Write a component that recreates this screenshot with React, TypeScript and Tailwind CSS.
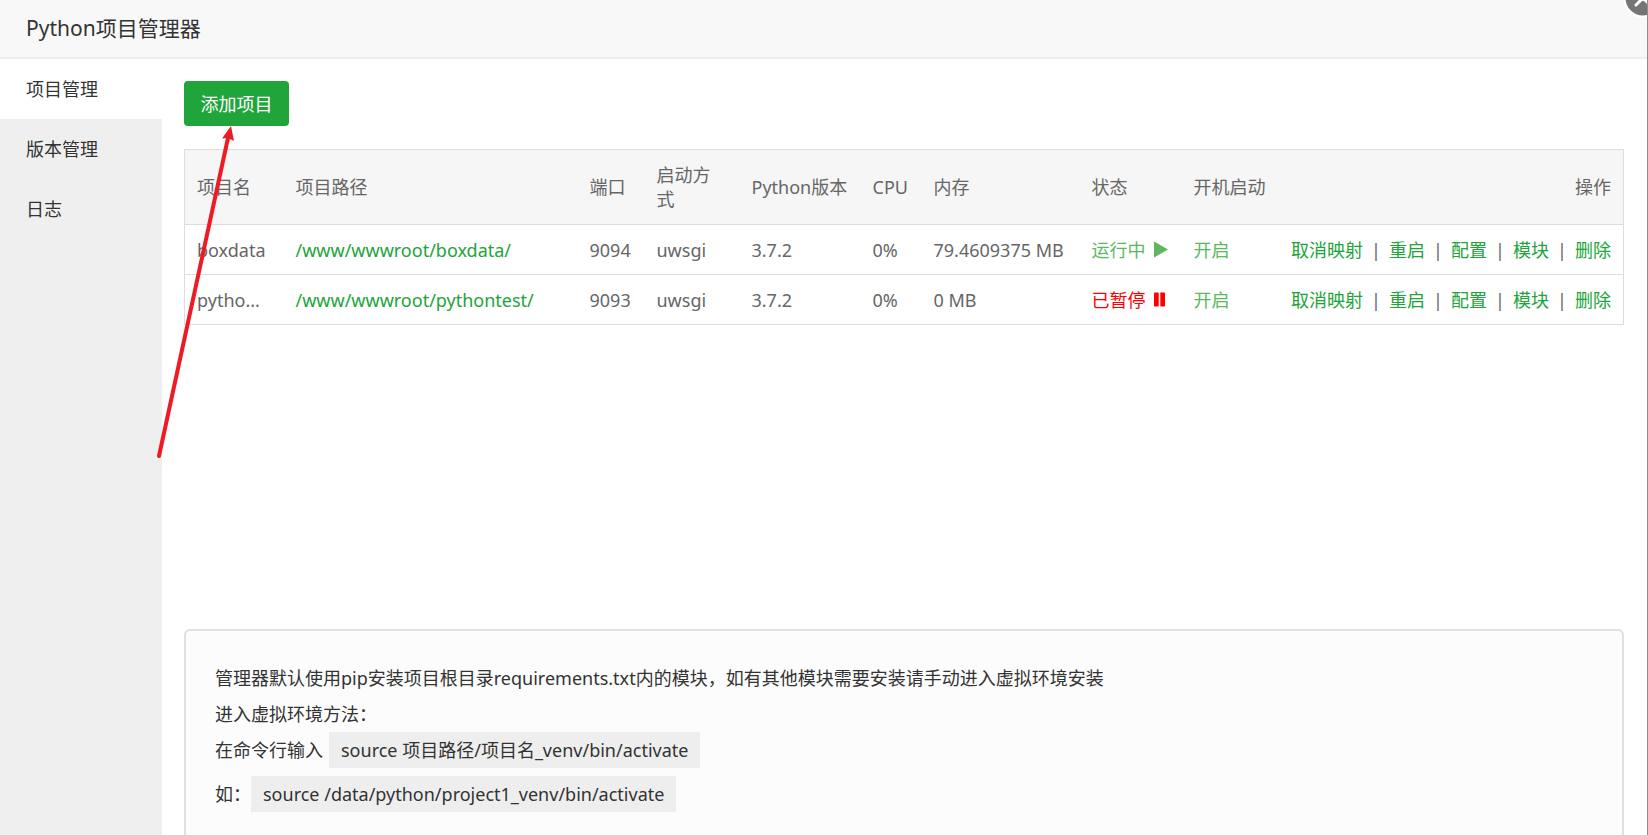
import React, { useState } from 'react';

const tabs = ['项目管理', '版本管理', '日志'];

const columns = [
  { title: '项目名', width: 'w-[99px]' },
  { title: '项目路径', width: 'w-[294px]' },
  { title: '端口', width: 'w-[67px]' },
  { title: '启动方式', width: 'w-[95px]' },
  { title: 'Python版本', width: 'w-[121px]' },
  { title: 'CPU', width: 'w-[61px]' },
  { title: '内存', width: 'w-[158px]' },
  { title: '状态', width: 'w-[102px]' },
  { title: '开机启动', width: 'w-[97px]' },
];

const projects = [
  {
    name: 'boxdata',
    path: '/www/wwwroot/boxdata/',
    port: '9094',
    mode: 'uwsgi',
    version: '3.7.2',
    cpu: '0%',
    memory: '79.4609375 MB',
    running: true,
  },
  {
    name: 'pytho...',
    path: '/www/wwwroot/pythontest/',
    port: '9093',
    mode: 'uwsgi',
    version: '3.7.2',
    cpu: '0%',
    memory: '0 MB',
    running: false,
  },
];

const actions = ['取消映射', '重启', '配置', '模块', '删除'];

function Status({ running }: { running: boolean }) {
  return running ? (
    <a href="#" className="flex items-center gap-2 text-[#5cb85c]">
      运行中
      <svg width="14" height="18" viewBox="0 0 14 18" fill="currentColor" aria-hidden="true">
        <path d="M0 0.5L14 8.5L0 16.5Z" />
      </svg>
    </a>
  ) : (
    <a href="#" className="flex items-center gap-2 text-[#ff0000]">
      已暂停
      <svg width="12" height="16" viewBox="0 0 12 16" fill="currentColor" aria-hidden="true">
        <rect y="0.5" width="4.7" height="14" rx="0.7" />
        <rect x="6.3" y="0.5" width="4.7" height="14" rx="0.7" />
      </svg>
    </a>
  );
}

export default function App() {
  const [active, setActive] = useState('项目管理');

  return (
    <div className="relative flex h-screen flex-col overflow-hidden border-r border-[#8e8e8e] bg-white font-['Noto_Sans','Noto_Sans_CJK_SC',sans-serif] text-lg leading-6 text-[#333]">
      <header className="shrink-0 border-b-2 border-[#eee] bg-[#f8f8f8] px-[26px]">
        <h1 className="text-[21px] leading-[57px]">Python项目管理器</h1>
      </header>

      <div className="flex min-h-0 flex-1">
        <nav className="w-[162px] shrink-0 bg-[#efefef]">
          {tabs.map((tab) => (
            <button
              key={tab}
              onClick={() => setActive(tab)}
              className={`block h-[60px] w-full cursor-pointer pl-[26px] text-left ${tab === active ? 'bg-white' : ''}`}
            >
              {tab}
            </button>
          ))}
        </nav>

        <main className="min-w-0 flex-1 pt-[22px] pr-[23px] pl-[22px]">
          <button className="h-[45px] w-[105px] cursor-pointer rounded bg-[#20a53a] text-white">添加项目</button>

          <div className="mt-[23px] h-[480px]">
            <table className="w-full table-fixed border-collapse border border-[#ddd] text-left text-[#666]">
              <thead className="bg-[#f6f6f6]">
                <tr className="h-[75px]">
                  {columns.map((col) => (
                    <th key={col.title} className={`px-3 font-normal ${col.width}`}>
                      {col.title}
                    </th>
                  ))}
                  <th className="px-3 text-right font-normal">操作</th>
                </tr>
              </thead>
              <tbody>
                {projects.map((p) => (
                  <tr key={p.path} className="h-[50px] border-t border-[#ddd] whitespace-nowrap">
                    <td className="px-3">{p.name}</td>
                    <td className="px-3">
                      <a href="#" className="text-[#20a53a]">{p.path}</a>
                    </td>
                    <td className="px-3">{p.port}</td>
                    <td className="px-3">{p.mode}</td>
                    <td className="px-3">{p.version}</td>
                    <td className="px-3">{p.cpu}</td>
                    <td className="px-3">{p.memory}</td>
                    <td className="px-3">
                      <Status running={p.running} />
                    </td>
                    <td className="px-3">
                      <a href="#" className="text-[#5cb85c]">开启</a>
                    </td>
                    <td className="px-3 text-right">
                      {actions.map((action, i) => (
                        <React.Fragment key={action}>
                          {i > 0 && <span className="inline-block w-[26px] text-center">|</span>}
                          <a href="#" className="text-[#20a53a]">{action}</a>
                        </React.Fragment>
                      ))}
                    </td>
                  </tr>
                ))}
              </tbody>
            </table>
          </div>

          <div className="rounded-md border-2 border-[#e0e0e0] bg-[#fcfcfc] px-[29px] py-[29px] leading-9">
            <p>管理器默认使用pip安装项目根目录requirements.txt内的模块，如有其他模块需要安装请手动进入虚拟环境安装</p>
            <p>进入虚拟环境方法：</p>
            <div className="mb-2 flex gap-[6px]">
              在命令行输入
              <code className="bg-[#eee] px-3 font-[inherit]">source 项目路径/项目名_venv/bin/activate</code>
            </div>
            <div className="flex">
              如：
              <code className="bg-[#eee] px-3 font-[inherit]">source /data/python/project1_venv/bin/activate</code>
            </div>
          </div>
        </main>
      </div>

      {/* close button hanging over the dialog corner */}
      <button aria-label="关闭" className="absolute -top-[23px] -right-[17px] cursor-pointer">
        <svg width="42" height="42" viewBox="0 0 42 42">
          <circle cx="21" cy="21" r="20" fill="#fff" />
          <circle cx="21" cy="21" r="17.5" fill="#757575" />
          <path d="M14 14L28 28M28 14L14 28" stroke="#fff" strokeWidth="3" strokeLinecap="round" />
        </svg>
      </button>

      {/* arrow pointing at the add button */}
      <svg
        className="pointer-events-none absolute top-[126px] left-[156px]"
        width="80"
        height="334"
        viewBox="0 0 80 334"
        aria-hidden="true"
      >
        <path d="M3 330L72 12" stroke="#ed1c24" strokeWidth="4" strokeLinecap="round" />
        <path d="M75 0L78 15L72 12L66 12.5Z" fill="#ed1c24" />
      </svg>
    </div>
  );
}
